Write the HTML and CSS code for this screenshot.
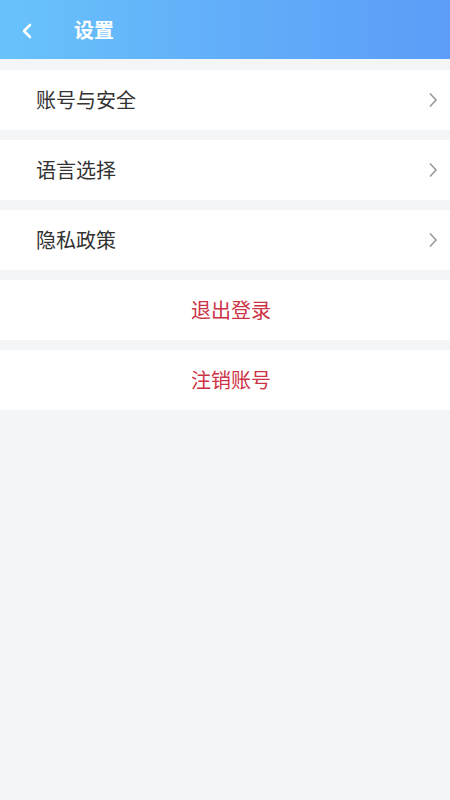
FILE: index.html
```html
<!DOCTYPE html>
<html lang="zh">
<head>
<meta charset="utf-8">
<title>设置</title>
<link rel="stylesheet" href="styles.css">
</head>
<body>
<header class="nav">
  <span class="back">
    <svg width="12" height="16" viewBox="0 0 12 16"><path d="M9 2 L3 8 L9 14" fill="none" stroke="#fff" stroke-width="2.6" stroke-linecap="round" stroke-linejoin="round"/></svg>
  </span>
  <h1 class="title">设置</h1>
</header>
<main class="list">
  <div class="row"><span class="label">账号与安全</span><svg class="arrow" width="10" height="16" viewBox="0 0 10 16"><path d="M2 1.5 L8 8 L2 14.5" fill="none" stroke="#999" stroke-width="1.6"/></svg></div>
  <div class="row"><span class="label">语言选择</span><svg class="arrow" width="10" height="16" viewBox="0 0 10 16"><path d="M2 1.5 L8 8 L2 14.5" fill="none" stroke="#999" stroke-width="1.6"/></svg></div>
  <div class="row"><span class="label">隐私政策</span><svg class="arrow" width="10" height="16" viewBox="0 0 10 16"><path d="M2 1.5 L8 8 L2 14.5" fill="none" stroke="#999" stroke-width="1.6"/></svg></div>
  <div class="row center"><span class="danger">退出登录</span></div>
  <div class="row center"><span class="danger">注销账号</span></div>
</main>
</body>
</html>
```
FILE: styles.css
```css
* { box-sizing: border-box; }
html, body { margin: 0; padding: 0; }
body {
  background: #f4f5f7;
  font-family: "Noto Sans CJK SC", "Noto Sans", sans-serif;
  width: 450px;
  min-height: 800px;
}
.nav {
  height: 59px;
  display: flex;
  align-items: center;
  background: linear-gradient(90deg, #68c3fb 0%, #62aef9 50%, #5b9df8 100%);
  padding-left: 21px;
}
.back { display: flex; width: 12px; height: 16px; margin-top: 2px; }
.title {
  margin: 0 0 0 41px;
  font-size: 20px;
  font-weight: 700;
  color: #fff;
  line-height: 1;
}
.list {
  display: flex;
  flex-direction: column;
  gap: 10px;
  padding-top: 11px;
}
.row {
  height: 60px;
  background: #fff;
  display: flex;
  align-items: center;
  justify-content: space-between;
  padding: 0 12px 0 36px;
}
.label { font-size: 20px; color: #333; line-height: 1; }
.arrow { display: block; }
.row.center { justify-content: center; padding: 0 0 0 12px; }
.danger { font-size: 20px; color: #cc3344; line-height: 1; }
```
